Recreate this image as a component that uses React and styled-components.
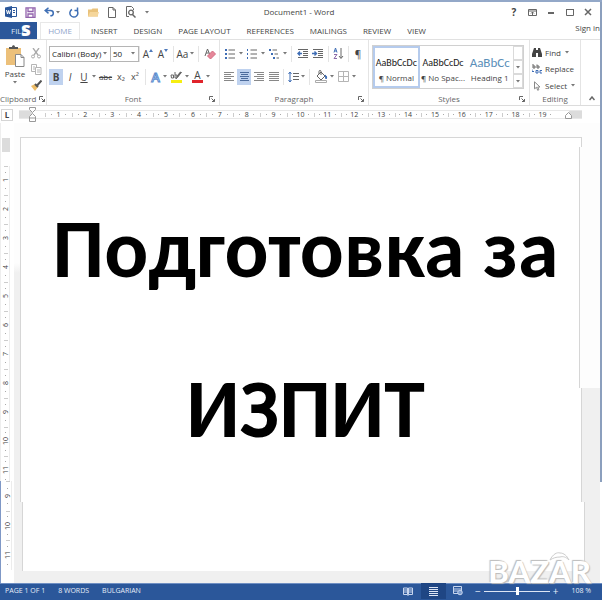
import React from "react";
import styled, { createGlobalStyle, css } from "styled-components";

const GlobalStyle = createGlobalStyle`
  * {
    box-sizing: border-box;
  }

  body {
    margin: 0;
    font-family: "Open Sans", "Noto Sans", sans-serif;
    font-size: 8px;
    line-height: 12px;
    color: #444;
    background: #fff;
  }

  button, select {
    font: inherit;
    color: inherit;
    padding: 0;
    border: 0;
    background: none;
  }
`;

const AppWindow = styled.div`
  min-height: 100vh;
  display: flex;
  flex-direction: column;
  border-top: 2px solid #93a8c8;
`;

const Upper = styled.div`
  flex: 1;
  display: flex;
`;

const Main = styled.div`
  flex: 1;
  min-width: 0;
  display: flex;
  flex-direction: column;
`;

const Edge = styled.div`
  width: 2px;
  height: 480px;
  background: #8b9fbd;
`;

/* Title bar */
const TitleBar = styled.header`
  height: 20px;
  display: grid;
  grid-template-columns: 1fr auto 1fr;
  align-items: center;
  padding: 0 7px 0 5px;
`;

const QuickAccess = styled.div`
  display: flex;
  align-items: center;
  gap: 7px;
`;

const WindowButtons = styled(QuickAccess)`
  justify-content: flex-end;
  gap: 8px;
`;

const Title = styled.h1`
  margin: 0;
  font-size: 8px;
  font-weight: 400;
`;

const IconButton = styled.button`
  display: flex;
  align-items: center;
  justify-content: center;
  flex: none;
  width: ${(p) => p.$w || 12}px;
  height: 16px;
  font-size: 10px;
`;

const Svg = styled.svg`
  display: block;
  flex: none;
  fill: none;
  stroke: ${(p) => p.$color || "#666"};
  stroke-width: 1;
`;

/* Tabs */
const Tabs = styled.nav`
  height: 18px;
  display: flex;
  align-items: stretch;
  border-bottom: 1px solid #e1e1e1;
`;

const Tab = styled.a`
  display: flex;
  align-items: center;
  padding: 0 8px;
  color: #444;
  text-decoration: none;
  white-space: nowrap;
`;

const FileTab = styled(Tab)`
  position: relative;
  width: 37px;
  padding: 0 11px;
  margin-right: 3px;
  color: #dbe4f3;
  background: #2b579a;
`;

const HomeTab = styled(Tab)`
  width: 40px;
  margin-right: 3px;
  justify-content: center;
  color: #8fa5ca;
  border: 1px solid #e8e8e8;
  border-bottom: 0;
`;

const SignIn = styled.a`
  margin-left: auto;
  color: #444;
  text-decoration: none;
  white-space: nowrap;
`;

const TabMark = styled.span`
  position: absolute;
  left: 21px;
  top: 0;
  font: 800 19px/15px "Open Sans", sans-serif;
  color: #fff;
`;

/* Ribbon */
const Ribbon = styled.div`
  height: 66px;
  display: flex;
  border-bottom: 1px solid #dcdcdc;
`;

const Group = styled.section`
  flex: ${(p) => p.$w} 0 ${(p) => p.$w}px;
  display: flex;
  flex-direction: column;
  padding: 5px ${(p) => (p.$tight ? 0 : 2)}px 0;
  border-right: 1px solid #e4e4e4;
`;

const GroupBody = styled.div`
  height: 48px;
  display: flex;
  flex-direction: column;
  justify-content: ${(p) => (p.$even ? "space-between" : "flex-start")};
  gap: ${(p) => (p.$even ? 0 : 6)}px;
`;

const GroupLabel = styled.div`
  display: grid;
  grid-template-columns: 8px 1fr 8px;
  align-items: center;
  text-align: center;
  white-space: nowrap;
  color: #666;
`;

const ClipboardLabel = styled(GroupLabel)`
  grid-template-columns: 1fr 7px;
  text-align: left;
`;

const Row = styled.div`
  display: flex;
  align-items: center;
  height: 17px;
`;

const Tool = styled.button`
  flex: none;
  display: flex;
  align-items: center;
  justify-content: center;
  width: ${(p) => p.$w || 15}px;
  height: 16px;
  font-size: ${(p) => p.$size || 10}px;
  ${(p) =>
    p.$on &&
    css`
      background: #bfd2ef;
    `}
`;

const Sep = styled.span`
  width: 1px;
  height: 16px;
  margin: 0 ${(p) => p.$m || 3}px;
  background: #e4e4e4;
`;

const CaretBox = styled.span`
  width: 6px;
  display: flex;
  justify-content: center;
`;

const OutlineLetter = styled.span`
  font-size: 13px;
  font-weight: 600;
  color: #fff;
  -webkit-text-stroke: 1px #5b8cce;
`;

const ColorLetter = styled.span`
  width: 11px;
  line-height: 10px;
  border-bottom: 3px solid #e0242b;
`;

const Combo = styled.div`
  display: flex;
  align-items: center;
  width: ${(p) => p.$w}px;
  height: 16px;
  padding-right: 2px;
  border: 1px solid #b5b5b5;
  margin-right: -1px;

  select {
    flex: 1;
    min-width: 0;
    appearance: none;
    padding-left: 2px;
    font-size: 8px;
    color: #222;
  }
`;

const ClipboardBody = styled.div`
  height: 48px;
  display: flex;
  justify-content: space-between;
  padding: 0 4px 0 2px;
`;

const PasteButton = styled.button`
  width: 26px;
  display: flex;
  flex-direction: column;
  align-items: center;
  gap: 1px;
`;

const Stack = styled.div`
  display: flex;
  flex-direction: column;
  justify-content: space-between;
`;

const Gallery = styled.div`
  display: flex;
  height: 44px;
  margin: 0 3px 4px 1px;
  border: 1px solid #d0d0d0;
`;

const StyleCard = styled.button`
  flex: 1;
  min-width: 0;
  display: flex;
  flex-direction: column;
  justify-content: flex-end;
  align-items: center;
  gap: 3px;
  padding-bottom: 2px;
  white-space: nowrap;
  border: 2px solid ${(p) => (p.$on ? "#b5cbed" : "transparent")};
`;

const Sample = styled.span`
  font-family: Carlito, Lato, sans-serif;
  font-size: ${(p) => (p.$heading ? 13 : 10)}px;
  color: ${(p) => (p.$heading ? "#5b8fb9" : "#222")};
`;

const Scroller = styled.div`
  width: 10px;
  display: flex;
  flex-direction: column;

  button {
    flex: 1;
    display: flex;
    align-items: center;
    justify-content: center;
    border: 1px solid #dadada;
  }
`;

const EditButton = styled.button`
  display: flex;
  align-items: center;
  gap: 3px;
  height: 15px;
  white-space: nowrap;
`;

const Collapse = styled.button`
  flex: 21 0 21px;
  display: flex;
  align-items: flex-end;
  justify-content: center;
  padding-bottom: 4px;
`;

/* Rulers */
const RulerBar = styled.div`
  height: 17px;
  display: flex;
  align-items: center;
  padding: 0 18px 0 1px;
`;

const TabStop = styled.button`
  width: 12px;
  height: 12px;
  border: 1px solid #d5d5d5;
  font-weight: 700;
  line-height: 8px;
  margin-right: 6px;
`;

const Ruler = styled.div`
  flex: 1;
  display: flex;
  height: 9px;
  background: #fff;
  border: solid #e8e8e8;
  border-width: 1px 0;
`;

const RulerEnd = styled.div`
  position: relative;
  width: 13px;
  background: #dcdcdc;
`;

const Marker = styled(Svg)`
  position: absolute;
  top: ${(p) => p.$top}px;
  ${(p) => p.$side}: -4px;
  stroke: #999;
`;

const Half = styled.div`
  width: 13px;
`;

const Cell = styled.div`
  flex: 1;
  display: flex;
  align-items: center;
  justify-content: space-between;
  font-size: 7px;
  line-height: 7px;

  &::before {
    content: "";
    height: 4px;
    border-left: 1px solid #ccc;
  }

  &::after {
    content: "";
    width: 1px;
  }
`;

const Dot = styled.i`
  width: 1px;
  height: 1px;
  background: #aaa;
`;

const Workspace = styled.div`
  flex: 1;
  display: flex;
`;

const SideRuler = styled.div`
  width: 14px;
  display: flex;
  flex-direction: column;
`;

const SidePart = styled.div`
  flex: ${(p) => p.$h} 0 0;
  min-height: 0;
  overflow: hidden;
  display: flex;
  flex-direction: column;
  width: 12px;
  padding-left: ${(p) => (p.$late ? 3 : 1)}px;
  border-left: 1px solid ${(p) => (p.$late ? "#7f98c6" : "#eee")};
`;

const SideEnd = styled.div`
  flex: none;
  width: 8px;
  height: 14px;
  margin: 15px 0 14px;
  background: #dcdcdc;
`;

const SideCell = styled.div`
  flex: 1 0 29px;
  width: 8px;
  display: flex;
  flex-direction: column;
  align-items: center;
  justify-content: space-between;
  font-size: 7px;
  line-height: 7px;
  border-right: 1px solid #ececec;

  &::before {
    content: "";
    width: 4px;
    border-top: 1px solid #ccc;
  }

  &::after {
    content: "";
    height: 1px;
  }

  span {
    writing-mode: vertical-rl;
    transform: rotate(180deg);
  }
`;

const SideTail = styled.div`
  flex: none;
  height: ${(p) => p.$h}px;
`;

/* Page */
const Canvas = styled.main`
  flex: 1;
  display: grid;
  padding: 14px 0 12px;
  background: linear-gradient(#fdfdfd 140px, #f0f0f0 150px);
`;

const Sheet = styled.div`
  grid-area: 1 / 1;
  display: flex;
  flex-direction: column;
`;

const SheetPart = styled.div`
  flex: ${(p) => p.$h} 0 0;
  margin: 0 ${(p) => p.$right}px 0 ${(p) => p.$left}px;
  background: #fff;
  border: solid #d6d6d6;
  border-width: ${(p) => (p.$first ? 1 : 0)}px 1px 0;
  box-shadow: ${(p) => (p.$pale ? "20px 0 0 #fdfdfd" : "none")};
`;

const Copy = styled.article`
  grid-area: 1 / 1;
  display: flex;
  flex-direction: column;
  align-items: center;
  gap: 60px;
  padding: 62px 3px 0 0;
  color: #000;
  font: 700 82px/100px Carlito, Lato, "Open Sans", sans-serif;
  white-space: nowrap;

  p {
    margin: 0;
  }
`;

/* Status bar */
const StatusBar = styled.footer`
  position: relative;
  height: 17px;
  display: flex;
  align-items: center;
  gap: 13px;
  padding: 0 11px 2px 5px;
  font-size: 7px;
  color: #e6edf8;
  background: #2b579a;
  border-top: 1px solid #6f8fc3;
`;

const Views = styled.div`
  margin-left: auto;
  display: flex;
  align-items: center;
`;

const View = styled.button`
  width: 25px;
  height: 16px;
  display: flex;
  align-items: center;
  justify-content: center;
  background: ${(p) => (p.$on ? "#1f4684" : "none")};
`;

const Zoom = styled.label`
  display: flex;
  align-items: center;
  gap: 3px;
  font-size: 10px;
  margin-left: -9px;

  input {
    appearance: none;
    width: 66px;
    height: 1px;
    margin: 0;
    background: #dce5f4;
  }

  input::-webkit-slider-thumb {
    appearance: none;
    width: 3px;
    height: 8px;
    background: #fff;
  }
`;

const Brand = styled.div`
  position: absolute;
  right: 11px;
  bottom: 17px;
  display: flex;
  font: 900 31px/24px Lato, "Open Sans", sans-serif;
  color: #fff;
  text-shadow: -1px -1px 1px #bbb, 1px 1px 1px #bbb;
`;

const Hat = styled(Svg)`
  position: absolute;
  right: 20px;
  top: -7px;
`;

const Caret = () => (
  <CaretBox>
    <svg width="4" height="3">
      <path d="M0 0h4L2 2.500z" fill="#777" />
    </svg>
  </CaretBox>
);

const Launcher = () => (
  <Svg width="6" height="6" viewBox="0 0 6 6">
    <path d="M.5 4V.5H4M2.500 2.500l3 3M5.500 3v2.500H3" />
  </Svg>
);

const Lines = ({ rows, color }) => (
  <Svg width="11" height="11" viewBox="0 0 11 11" $color={color || "#888"}>
    {rows.map(([x, w], i) => (
      <path key={i} d={`M${x} ${i * 2 + 1.5}h${w}`} />
    ))}
  </Svg>
);

const ListIcon = ({ step = 0, marks = 2 }) => (
  <Svg width="12" height="12" viewBox="0 0 12 12">
    {[0, 1, 2].map((i) => (
      <g key={i}>
        <path
          d={`M${1 + i * step} ${2 + i * 4}h${marks}`}
          stroke="#3e6db5"
          strokeWidth="2"
        />
        <path d={`M${4.5 + i * step} ${2 + i * 4}H${step ? 9 + i : 11}`} />
      </g>
    ))}
  </Svg>
);

const IndentIcon = ({ flip }) => (
  <Svg width="12" height="11" viewBox="0 0 12 11">
    <path d="M1 1.500h10M6 3.500h5M6 5.500h5M6 7.500h5M1 9.500h10" />
    <path
      d={flip ? "M0 5.500h4M2.500 3.500l2 2-2 2" : "M1 5.500h4M3 3.500l-2 2 2 2"}
      stroke="#3e6db5"
      strokeWidth="1.400"
    />
  </Svg>
);

const WordIcon = () => (
  <svg width="12" height="12" viewBox="0 0 12 12">
    <path d="M7 1.500h4.500v9H7" fill="#fff" stroke="#2b579a" />
    <path d="M0 1.500L7 0v12l-7-1.500z" fill="#2b579a" />
    <path d="M1.500 4l1 4 1-3.500 1 3.500 1-4" fill="none" stroke="#fff" />
    <path d="M8 4.500h2M8 6.500h2" stroke="#2b579a" />
  </svg>
);

const SaveIcon = () => (
  <Svg width="11" height="11" viewBox="0 0 11 11" $color="#9162ac">
    <path d="M1 .8h9v9.500H1zM3 1v3.500h5V1M3 10V7h5v3" strokeWidth="1.300" />
  </Svg>
);

const UndoIcon = () => (
  <Svg width="11" height="10" viewBox="0 0 11 10" $color="#3f6fb5">
    <path
      d="M4.500 .8L1.200 3.600l3.300 2.800M1.500 3.600h4.800c4 0 4 5 0 5.200"
      strokeWidth="1.500"
    />
  </Svg>
);

const RedoIcon = () => (
  <Svg width="10" height="11" viewBox="0 0 10 11" $color="#3f6fb5">
    <path d="M7.500 3A4 4 0 1 1 3 2.500M5.500 3.500h3V.5" strokeWidth="1.500" />
  </Svg>
);

const FolderIcon = () => (
  <svg width="11" height="9" viewBox="0 0 11 9">
    <path d="M0 8.500V1.500h3.500l1-1H10v8z" fill="#e9c27b" />
    <path d="M0 8.500L2 4h9l-1.500 4.500z" fill="#f5d69b" />
  </svg>
);

const PageIcon = () => (
  <Svg width="8" height="11" viewBox="0 0 8 11">
    <path d="M.5 .5h4.500l2.500 2.500v7.500h-7zM5 .5V3h2.500" />
  </Svg>
);

const PreviewIcon = () => (
  <Svg width="10" height="12" viewBox="0 0 10 12">
    <path d="M3 10.500H.5V.5h5l2 2V4" />
    <circle cx="5" cy="6.500" r="2.300" strokeWidth="1.300" />
    <path d="M6.500 8.500L9.500 11.500" strokeWidth="1.500" />
  </Svg>
);

const RibbonOptionsIcon = () => (
  <Svg width="9" height="7" viewBox="0 0 9 7">
    <path d="M.5 .5h8v6h-8zM.5 2h8M4.500 6V3M3 4.500L4.500 3 6 4.500" />
  </Svg>
);

const PasteIcon = () => (
  <svg width="19" height="22" viewBox="0 0 19 22">
    <path d="M0 3h15v17H0z" fill="#ecc07a" />
    <path d="M3 4V2h3c0-2.500 3-2.500 3 0h3v2z" fill="#555" />
    <path d="M9.500 9.500H15l3 3v9H9.500z" fill="#fff" stroke="#888" />
    <path d="M15 9.500v3h3" fill="none" stroke="#888" />
  </svg>
);

const CutIcon = () => (
  <Svg width="10" height="11" viewBox="0 0 10 11" $color="#aaa">
    <path d="M2 0l5 7M8 0L3 7" strokeWidth="1.300" />
    <circle cx="2" cy="8.500" r="1.500" />
    <circle cx="8" cy="8.500" r="1.500" />
  </Svg>
);

const CopyIcon = () => (
  <Svg width="11" height="11" viewBox="0 0 11 11" $color="#b5b5b5">
    <path d="M.5 .5h5v7h-5zM2 3h2M2 5h2" />
    <path d="M4.500 3.500h5.500v7H4.500zM6 6h3M6 8h3" fill="#fff" />
  </Svg>
);

const BrushIcon = () => (
  <svg width="11" height="11" viewBox="0 0 11 11">
    <path d="M0 6l4-2 3 3-3 4z" fill="#edbd68" />
    <path d="M4 4l3 3M6.500 5L10.500 .5" stroke="#555" strokeWidth="2" />
  </svg>
);

const EraserIcon = () => (
  <Svg width="12" height="12" viewBox="0 0 12 12">
    <path d="M1 8l2.500-7L6 7M2 5h3" />
    <path d="M3.500 8l5-5 3 3-5 5z" fill="#e58799" stroke="#d46b80" />
  </Svg>
);

const HighlightIcon = () => (
  <Svg width="13" height="13" viewBox="0 0 13 13">
    <path d="M1 11.500h11" stroke="#f6ee12" strokeWidth="3" />
    <path d="M1 5h2.500v3H1.500zM5 2v6h2V5H5M6 9l5.500-7" />
    <path d="M7 7l4-5" strokeWidth="2" />
  </Svg>
);

const SortIcon = () => (
  <Svg width="11" height="13" viewBox="0 0 11 13">
    <path d="M1 5.500l1.500-4.500L4 5.500M1.500 4h2" stroke="#3e6db5" />
    <path d="M1 7.500h3l-3 4h3" stroke="#8b6aa9" />
    <path d="M8 1v10M6 9l2 2.500L10 9" />
  </Svg>
);

const SpacingIcon = () => (
  <Svg width="11" height="12" viewBox="0 0 11 12">
    <path d="M5 2.500h6M5 5.500h6M5 8.500h6" />
    <path d="M2 1v10M.5 3L2 1l1.500 2M.5 9L2 11l1.500-2" stroke="#3e6db5" />
  </Svg>
);

const BucketIcon = () => (
  <Svg width="13" height="13" viewBox="0 0 13 13">
    <path d="M2 6l4-4 4 4-4 4zM4 4V1.500c0-1.500 2-1.500 2 0V5" />
    <path d="M10 5c2 1 2 3 1 4z" fill="#3e6db5" stroke="#3e6db5" />
    <path d="M.5 10.500h11v2H.5z" stroke="#aaa" />
  </Svg>
);

const BorderIcon = () => (
  <Svg width="11" height="11" viewBox="0 0 11 11" $color="#b5b5b5">
    <path d="M.5 .5h10v10H.5zM5.500 1v9M1 5.500h9" />
  </Svg>
);

const FindIcon = () => (
  <svg width="10" height="9" viewBox="0 0 10 9">
    <path d="M2 0h2v2h2V0h2l2 6v3H6V5H4v4H0V6z" fill="#444" />
  </svg>
);

const ReplaceIcon = () => (
  <Svg width="10" height="10" viewBox="0 0 10 10">
    <path d="M1 0v4h2V2H1M5 .5v3.500h2V2H5" />
    <path
      d="M6 6.500H4v2.500h2zM10 6.500H8v2.500h2M0 5.500v2h2"
      stroke="#3e6db5"
    />
  </Svg>
);

const SelectIcon = () => (
  <Svg width="10" height="10" viewBox="0 0 10 10" $color="#888">
    <path d="M2.500 .8v7l2-1.500 1.200 3 1.200-.6-1.200-2.700h2.300z" />
  </Svg>
);

const SizeArrow = ({ up }) => (
  <svg width="5" height="10">
    <path d={up ? "M0 3L2 0l2 3z" : "M0 0h4L2 3z"} fill="#4f7abb" />
  </svg>
);

const Label = ({ children }) => (
  <GroupLabel>
    <span />
    {children}
    <Launcher />
  </GroupLabel>
);

const RibbonBar = () => (
  <Ribbon>
    <Group $w={47} $tight>
      <ClipboardBody>
        <PasteButton>
          <PasteIcon />
          Paste
          <Caret />
        </PasteButton>
        <Stack>
          <IconButton aria-label="Cut"><CutIcon /></IconButton>
          <IconButton aria-label="Copy"><CopyIcon /></IconButton>
          <IconButton aria-label="Format painter"><BrushIcon /></IconButton>
        </Stack>
      </ClipboardBody>
      <ClipboardLabel>
        Clipboard
        <Launcher />
      </ClipboardLabel>
    </Group>

    <Group $w={171}>
      <GroupBody>
        <Row>
          <Combo $w={62}>
            <select aria-label="Font">
              <option>Calibri (Body)</option>
            </select>
            <Caret />
          </Combo>
          <Combo $w={29}>
            <select aria-label="Font size">
              <option>50</option>
            </select>
            <Caret />
          </Combo>
          <Sep $m={1} />
          <Tool aria-label="Grow font">A<SizeArrow up /></Tool>
          <Tool aria-label="Shrink font">A<SizeArrow /></Tool>
          <Sep $m={2} />
          <Tool $w={13}>Aa</Tool>
          <Caret />
          <Sep />
          <Tool aria-label="Clear formatting"><EraserIcon /></Tool>
        </Row>
        <Row>
          <Tool $w={14} $on><b>B</b></Tool>
          <Tool $w={14}><i>I</i></Tool>
          <Tool $w={14}><u>U</u></Tool>
          <Caret />
          <Tool $w={17} $size={8}><s>abc</s></Tool>
          <Tool $w={14} $size={9}>x₂</Tool>
          <Tool $w={14} $size={9}>x²</Tool>
          <Sep />
          <Tool $w={13} aria-label="Text effects">
            <OutlineLetter>A</OutlineLetter>
          </Tool>
          <Caret />
          <Tool $w={16} aria-label="Highlight"><HighlightIcon /></Tool>
          <Caret />
          <Tool $w={15} aria-label="Font color">
            <ColorLetter>A</ColorLetter>
          </Tool>
          <Caret />
        </Row>
      </GroupBody>
      <Label>Font</Label>
    </Group>

    <Group $w={149}>
      <GroupBody>
        <Row>
          <Tool $w={16} aria-label="Bullets"><ListIcon /></Tool>
          <Caret />
          <Tool $w={16} aria-label="Numbering"><ListIcon marks={1} /></Tool>
          <Caret />
          <Tool $w={16} aria-label="Multilevel list"><ListIcon step={2} /></Tool>
          <Caret />
          <Sep />
          <Tool aria-label="Decrease indent"><IndentIcon /></Tool>
          <Tool aria-label="Increase indent"><IndentIcon flip /></Tool>
          <Sep />
          <Tool $w={13} aria-label="Sort"><SortIcon /></Tool>
          <Sep />
          <Tool $w={12}>¶</Tool>
        </Row>
        <Row>
          <Tool aria-label="Align left">
            <Lines rows={[[0, 10], [0, 7], [0, 10], [0, 7], [0, 10]]} />
          </Tool>
          <Tool $on $w={14} aria-label="Center">
            <Lines
              color="#4d6c9c"
              rows={[[1, 9], [2, 7], [1, 9], [2, 7], [1, 9]]}
            />
          </Tool>
          <Tool aria-label="Align right">
            <Lines rows={[[1, 10], [4, 7], [1, 10], [4, 7], [1, 10]]} />
          </Tool>
          <Tool aria-label="Justify">
            <Lines rows={[[1, 10], [1, 10], [1, 10], [1, 10], [1, 10]]} />
          </Tool>
          <Sep $m={2} />
          <Tool $w={14} aria-label="Line spacing"><SpacingIcon /></Tool>
          <Caret />
          <Sep />
          <Tool $w={16} aria-label="Shading"><BucketIcon /></Tool>
          <Caret />
          <Tool $w={16} aria-label="Borders"><BorderIcon /></Tool>
          <Caret />
        </Row>
      </GroupBody>
      <Label>Paragraph</Label>
    </Group>

    <Group $w={161}>
      <Gallery>
        <StyleCard $on>
          <Sample>AaBbCcDc</Sample>
          <span>¶ Normal</span>
        </StyleCard>
        <StyleCard>
          <Sample>AaBbCcDc</Sample>
          <span>¶ No Spac...</span>
        </StyleCard>
        <StyleCard>
          <Sample $heading>AaBbCc</Sample>
          <span>Heading 1</span>
        </StyleCard>
        <Scroller>
          <button aria-label="Previous styles" />
          <button aria-label="Next styles"><Caret /></button>
          <button aria-label="More styles"><Caret /></button>
        </Scroller>
      </Gallery>
      <Label>Styles</Label>
    </Group>

    <Group $w={51}>
      <GroupBody $even>
        <EditButton><FindIcon />Find<Caret /></EditButton>
        <EditButton><ReplaceIcon />Replace</EditButton>
        <EditButton><SelectIcon />Select<Caret /></EditButton>
      </GroupBody>
      <GroupLabel>
        <span />
        Editing
      </GroupLabel>
    </Group>
    <Collapse aria-label="Collapse ribbon">
      <Svg width="6" height="5" viewBox="0 0 6 5">
        <path d="M.5 4L3 1l2.500 3" strokeWidth="1.500" />
      </Svg>
    </Collapse>
  </Ribbon>
);

const range = (from, to) =>
  Array.from({ length: to - from + 1 }, (_, i) => from + i);

const SideCells = ({ from, to }) =>
  range(from, to).map((n) => (
    <SideCell key={n}>
      <Dot />
      <span>{n}</span>
      <Dot />
    </SideCell>
  ));

const App = () => {
  return (
    <>
      <GlobalStyle />
      <AppWindow>
        <Upper>
          <Main>
            <TitleBar>
              <QuickAccess>
                <WordIcon />
                <IconButton aria-label="Save"><SaveIcon /></IconButton>
                <IconButton $w={18} aria-label="Undo">
                  <UndoIcon />
                  <Caret />
                </IconButton>
                <IconButton aria-label="Redo"><RedoIcon /></IconButton>
                <IconButton aria-label="Open"><FolderIcon /></IconButton>
                <IconButton aria-label="New"><PageIcon /></IconButton>
                <IconButton aria-label="Preview"><PreviewIcon /></IconButton>
                <IconButton $w={6} aria-label="Customize"><Caret /></IconButton>
              </QuickAccess>
              <Title>Document1 - Word</Title>
              <WindowButtons>
                <IconButton $w={10}><b>?</b></IconButton>
                <IconButton $w={11} aria-label="Ribbon options">
                  <RibbonOptionsIcon />
                </IconButton>
                <IconButton $w={10} aria-label="Minimize">
                  <Svg width="6" height="8"><path d="M0 5h6" strokeWidth="2" /></Svg>
                </IconButton>
                <IconButton $w={11} aria-label="Maximize">
                  <Svg width="8" height="8"><path d="M.5 1.500h7v6h-7zM0 1.500h8" /></Svg>
                </IconButton>
                <IconButton $w={10} aria-label="Close">
                  <Svg width="8" height="8">
                    <path d="M1 1l6 6M7 1L1 7" strokeWidth="1.500" />
                  </Svg>
                </IconButton>
              </WindowButtons>
            </TitleBar>

            <Tabs>
              <FileTab href="#file">
                FILE
                <TabMark>s</TabMark>
              </FileTab>
              <HomeTab href="#home">HOME</HomeTab>
              <Tab href="#insert">INSERT</Tab>
              <Tab href="#design">DESIGN</Tab>
              <Tab href="#layout">PAGE LAYOUT</Tab>
              <Tab href="#references">REFERENCES</Tab>
              <Tab href="#mailings">MAILINGS</Tab>
              <Tab href="#review">REVIEW</Tab>
              <Tab href="#view">VIEW</Tab>
              <SignIn href="#signin">Sign in</SignIn>
            </Tabs>

            <RibbonBar />

            <RulerBar>
              <TabStop aria-label="Tab stop">L</TabStop>
              <Ruler>
                <RulerEnd>
                  <Marker
                    $side="right"
                    $top={-4}
                    width="7"
                    height="16"
                    viewBox="0 0 7 16"
                  >
                    <path
                      d="M.5 .5h6v2l-3 3-3-3zM3.500 6.500l3 3v5h-6v-5zM.5 11h6"
                      fill="#fff"
                    />
                  </Marker>
                </RulerEnd>
                <Half />
                {range(1, 19).map((n) => (
                  <Cell key={n}>
                    <Dot />
                    {n}
                    <Dot />
                  </Cell>
                ))}
                <Half />
                <RulerEnd>
                  <Marker
                    $side="left"
                    $top={1}
                    width="7"
                    height="8"
                    viewBox="0 0 7 8"
                  >
                    <path d="M3.500 .5l3 3v3h-6v-3z" fill="#fff" />
                  </Marker>
                </RulerEnd>
              </Ruler>
            </RulerBar>

            <Workspace>
              <SideRuler>
                <SidePart $h={359}>
                  <SideEnd />
                  <SideCells from={1} to={11} />
                </SidePart>
                <SidePart $h={102} $late>
                  <SideCells from={9} to={11} />
                  <SideTail $h={13} />
                </SidePart>
              </SideRuler>
              <Canvas>
                <Sheet>
                  <SheetPart $h={9} $left={6} $right={18} $first $pale />
                  <SheetPart $h={242} $left={6} $right={20} $pale />
                  <SheetPart $h={115} $left={6} $right={18} />
                  <SheetPart $h={69} $left={8} $right={15} />
                </Sheet>
                <Copy>
                  <p>Подготовка за</p>
                  <p>ИЗПИТ</p>
                </Copy>
              </Canvas>
            </Workspace>
          </Main>
          <Edge />
        </Upper>

        <StatusBar>
          <span>PAGE 1 OF 1</span>
          <span>8 WORDS</span>
          <span>BULGARIAN</span>
          <Views>
            <View aria-label="Read mode">
              <Svg width="10" height="9" viewBox="0 0 10 9" $color="#c8d6ee">
                <path d="M.5 1h4v6.500h-4zM5.500 1h4v6.500h-4zM1 3h8M1 5h8M5 1v8" />
              </Svg>
            </View>
            <View $on aria-label="Print layout">
              <Lines
                color="#dbe5f6"
                rows={[[1, 9], [1, 9], [1, 9], [1, 9], [1, 9]]}
              />
            </View>
            <View aria-label="Web layout">
              <Svg width="10" height="10" viewBox="0 0 10 10" $color="#c8d6ee">
                <path d="M.5 .5h8v7h-8zM1 3h7M1 5h4" />
                <circle cx="7" cy="6.500" r="2.300" fill="#7f9fd0" />
              </Svg>
            </View>
          </Views>
          <Zoom>
            −
            <input type="range" aria-label="Zoom" defaultValue="52" />
            +
          </Zoom>
          <span>108 %</span>
          <Brand>
            BAZAR
            <Hat width="22" height="9" viewBox="0 0 22 9" $color="#ccc">
              <path
                d="M1 8C4 2 8 0 11 1c4 0 7 3 9 7-3-3-6-4-9-3-4 0-7 1-10 3z"
                fill="#fff"
              />
            </Hat>
          </Brand>
        </StatusBar>
      </AppWindow>
    </>
  );
};

export default App;
